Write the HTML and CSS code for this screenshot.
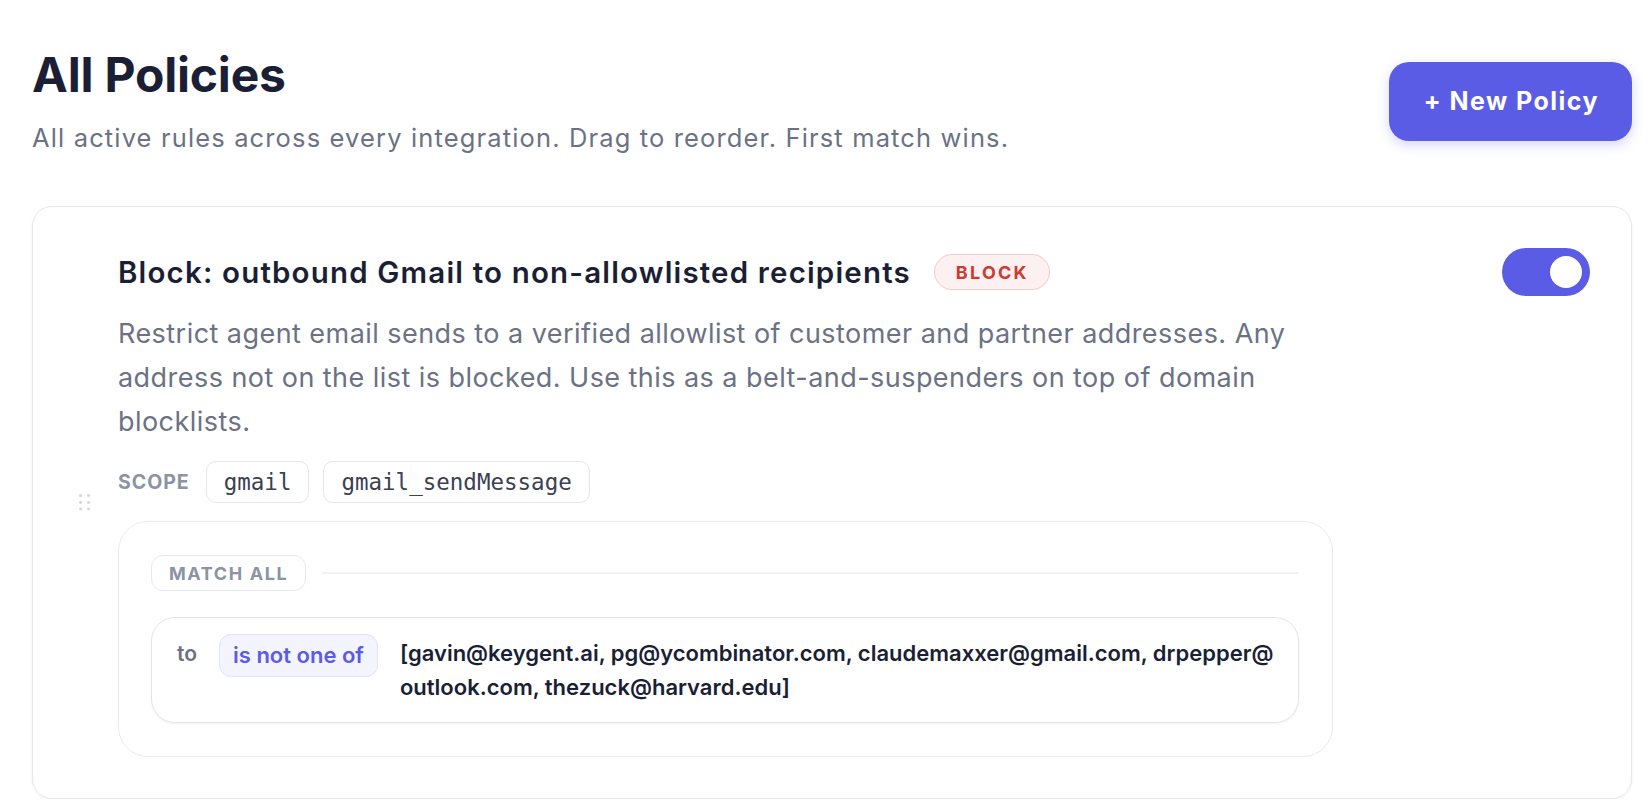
FILE: index.html
```html
<!DOCTYPE html>
<html lang="en">
<head>
<meta charset="utf-8">
<title>All Policies</title>
<link rel="stylesheet" href="styles.css">
</head>
<body>
<div class="page">
  <header class="page-head">
    <div class="head-text">
      <h1 class="page-title">All Policies</h1>
      <p class="page-sub">All active rules across every integration. Drag to reorder. First match wins.</p>
    </div>
    <button class="btn-primary">+ New Policy</button>
  </header>

  <section class="policy-card">
    <div class="grip">
      <svg width="12" height="17" viewBox="0 0 12 17">
        <circle cx="1.6" cy="1.6" r="1.6"/><circle cx="9.6" cy="1.6" r="1.6"/>
        <circle cx="1.6" cy="8.3" r="1.6"/><circle cx="9.6" cy="8.3" r="1.6"/>
        <circle cx="1.6" cy="15" r="1.6"/><circle cx="9.6" cy="15" r="1.6"/>
      </svg>
    </div>
    <div class="policy-main">
      <div class="policy-title-row">
        <h2 class="policy-title">Block: outbound Gmail to non-allowlisted recipients</h2>
        <span class="badge-block">BLOCK</span>
      </div>
      <p class="policy-desc">Restrict agent email sends to a verified allowlist of customer and partner addresses. Any address not on the list is blocked. Use this as a belt-and-suspenders on top of domain blocklists.</p>
      <div class="scope-row">
        <span class="scope-label">SCOPE</span>
        <span class="chip">gmail</span>
        <span class="chip">gmail_sendMessage</span>
      </div>
      <div class="cond-group">
        <div class="group-head">
          <span class="group-chip">MATCH ALL</span>
          <span class="group-line"></span>
        </div>
        <div class="cond-row">
          <span class="cond-field">to</span>
          <span class="cond-op">is not one of</span>
          <span class="cond-value">[gavin@keygent.ai, pg@ycombinator.com, claudemaxxer@gmail.com, drpepper@outlook.com, thezuck@harvard.edu]</span>
        </div>
      </div>
    </div>
    <div class="toggle is-on"><span class="knob"></span></div>
  </section>
</div>
</body>
</html>
```

FILE: styles.css
```css
* { box-sizing: border-box; }
html, body { margin: 0; padding: 0; background: #ffffff; }
body {
  font-family: Inter, "Noto Sans", "Liberation Sans", sans-serif;
  color: #1b1f35;
}
.page {
  padding: 46px 18px 0 32px;
}
.page-head {
  display: flex;
  justify-content: space-between;
  align-items: center;
}
.page-title {
  margin: 0;
  font-size: 48px;
  line-height: 58px;
  font-weight: 700;
  color: #1b1f35;
  letter-spacing: -0.2px;
}
.page-sub {
  margin: 16px 0 0;
  font-size: 25.5px;
  line-height: 36px;
  letter-spacing: 1.14px;
  color: #6b7285;
}
.btn-primary {
  font-family: inherit;
  font-size: 25px;
  line-height: 36px;
  font-weight: 700;
  letter-spacing: 1.45px;
  color: #ffffff;
  background: #5b5ce6;
  border: none;
  border-radius: 20px;
  padding: 21px 33px 22px 35px;
  box-shadow: 0 4px 12px rgba(91, 92, 230, 0.25);
}

.policy-card {
  margin-top: 50px;
  display: flex;
  align-items: center;
  border: 1px solid #e5e7ec;
  border-radius: 20px;
  padding: 41px 41px 41px 42px;
  box-shadow: 0 1px 3px rgba(15, 23, 42, 0.06);
}
.grip {
  width: 43px;
  flex: none;
  padding-left: 4px;
  display: flex;
}
.grip svg { fill: #d6d9df; }
.policy-main {
  width: 1215px;
  flex: none;
  align-self: flex-start;
}
.policy-title-row {
  height: 48px;
  display: flex;
  align-items: center;
  gap: 23px;
}
.policy-title {
  margin: 0;
  font-size: 29.5px;
  line-height: 34px;
  font-weight: 600;
  letter-spacing: 1.16px;
  color: #1b1f35;
}
.badge-block {
  height: 36px;
  display: inline-flex;
  align-items: center;
  padding: 0 20px 0 21px;
  border: 1.5px solid #f4c9c6;
  background: #fcf0f0;
  border-radius: 18px;
  color: #cc3a32;
  font-size: 18px;
  font-weight: 700;
  letter-spacing: 2.25px;
}
.policy-desc {
  margin: 16px 0 0;
  font-size: 27px;
  line-height: 44px;
  letter-spacing: 0.45px;
  color: #6b7285;
}
.scope-row {
  margin-top: 17px;
  display: flex;
  align-items: center;
  gap: 14px;
}
.scope-label {
  font-size: 19.5px;
  font-weight: 700;
  letter-spacing: 1px;
  color: #8b93a5;
  margin-right: 2px;
}
.chip {
  height: 42px;
  display: inline-flex;
  align-items: center;
  padding: 0 17px;
  border: 1px solid #e3e6ec;
  border-radius: 10px;
  font-family: "DejaVu Sans Mono", "Liberation Mono", monospace;
  font-size: 22.5px;
  color: #3a4152;
}

.cond-group {
  margin-top: 18px;
  border: 1px solid #e8ebf0;
  border-radius: 30px;
  padding: 33px 33px 33px 32px;
}
.group-head {
  display: flex;
  align-items: center;
  gap: 16px;
}
.group-chip {
  height: 36px;
  display: inline-flex;
  align-items: center;
  padding: 0 17px 0 17px;
  border: 1px solid #e6e9ee;
  border-radius: 12px;
  font-size: 18px;
  font-weight: 700;
  letter-spacing: 1.6px;
  color: #8b93a5;
}
.group-line {
  flex: 1;
  height: 2px;
  background: #f0f2f5;
}
.cond-row {
  margin-top: 26px;
  display: flex;
  align-items: flex-start;
  gap: 22px;
  border: 1px solid #e2e5ec;
  border-radius: 24px;
  padding: 16px 19px 18px 25px;
  box-shadow: 0 1px 2px rgba(15, 23, 42, 0.05);
}
.cond-field {
  margin-top: 3px;
  font-size: 21px;
  line-height: 34px;
  font-weight: 600;
  color: #6b7285;
}
.cond-op {
  padding: 4px 13px;
  border: 1px solid #e1e2fb;
  background: #f4f4ff;
  border-radius: 12px;
  font-size: 22px;
  line-height: 33px;
  font-weight: 600;
  color: #5b5ce6;
  white-space: nowrap;
}
.cond-value {
  margin-top: 3px;
  flex: 1;
  min-width: 0;
  font-size: 22px;
  line-height: 33.5px;
  font-weight: 600;
  color: #1b1f35;
  word-break: break-all;
}

.toggle {
  margin-left: auto;
  align-self: flex-start;
  width: 88px;
  height: 48px;
  border-radius: 24px;
  background: #5b5ce6;
  display: flex;
  align-items: center;
  justify-content: flex-end;
  padding: 0 8px;
  flex: none;
}
.knob {
  width: 32px;
  height: 32px;
  border-radius: 50%;
  background: #ffffff;
}
```
